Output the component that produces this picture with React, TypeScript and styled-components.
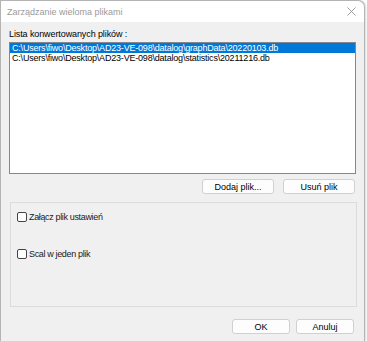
import React from "react";
import styled, { createGlobalStyle } from "styled-components";

const Global = createGlobalStyle`
  html, body { margin: 0; padding: 0; background: #ffffff; overflow: hidden; }
  body { font-family: "Liberation Sans", Arial, sans-serif; }
`;

const Window = styled.div`
  width: 365px;
  height: 341px;
  box-sizing: border-box;
  border: 1px solid #b4b4b4;
  border-bottom: none;
  border-top-right-radius: 7px;
  background: #f0f0f0;
  display: flex;
  flex-direction: column;
  box-shadow: 1px 0 2px rgba(0,0,0,0.15);
  overflow: hidden;
`;

const TitleBar = styled.div`
  height: 21px;
  flex: none;
  background: #ffffff;
  display: flex;
  align-items: center;
  justify-content: space-between;
  padding: 0 8px 0 6px;
  border-top-right-radius: 7px;
`;

const Title = styled.span`
  font-size: 9px;
  color: #9a9a9a;
`;

const Close = styled.svg`
  width: 9px;
  height: 9px;
`;

const Body = styled.div`
  flex: 1;
  display: flex;
  flex-direction: column;
  padding: 0 8px 0 8px;
`;

const Label = styled.div`
  font-size: 9px;
  color: #000;
  margin-top: 6px;
  height: 12px;
  line-height: 12px;
  letter-spacing: -0.1px;
`;

const ListBox = styled.div`
  margin-top: 2px;
  height: 132px;
  flex: none;
  box-sizing: border-box;
  border: 1px solid #828790;
  background: #fff;
  padding: 0;
`;

const Row = styled.div<{ $selected?: boolean }>`
  height: 10px;
  line-height: 10px;
  font-size: 9px;
  letter-spacing: -0.2px;
  padding-left: 2px;
  color: ${(p) => (p.$selected ? "#ffffff" : "#000000")};
  background: ${(p) => (p.$selected ? "#0078d7" : "transparent")};
  white-space: nowrap;
`;

const ButtonRow = styled.div`
  display: flex;
  justify-content: flex-end;
  gap: 9px;
  margin-top: 5px;
  padding-right: 1px;
`;

const Button = styled.div<{ $w?: number }>`
  width: ${(p) => p.$w ?? 72}px;
  height: 15px;
  box-sizing: border-box;
  border: 1px solid #d0d0d0;
  border-radius: 3px;
  background: #fdfdfd;
  font-size: 9px;
  color: #000;
  display: flex;
  align-items: center;
  justify-content: center;
`;

const Group = styled.div`
  margin-top: 8px;
  margin-left: 1px;
  width: 347px;
  height: 105px;
  flex: none;
  box-sizing: border-box;
  border: 1px solid #dcdcdc;
  display: flex;
  flex-direction: column;
  padding: 9px 0 0 6px;
  gap: 27px;
`;

const Check = styled.label`
  display: flex;
  align-items: center;
  height: 10px;
  gap: 2px;
  font-size: 9px;
  letter-spacing: -0.35px;
  color: #1a1a1a;
`;

const Box = styled.span`
  width: 10px;
  height: 10px;
  box-sizing: border-box;
  border: 1px solid #444;
  border-radius: 2px;
  background: #fff;
`;

const Footer = styled.div`
  display: flex;
  justify-content: flex-end;
  gap: 6px;
  margin-top: 12px;
  padding-right: 2px;
`;

export default function App() {
  return (
    <>
      <Global />
      <Window>
        <TitleBar>
          <Title>Zarządzanie wieloma plikami</Title>
          <Close viewBox="0 0 10 10">
            <path d="M0.5 0.5 L9.5 9.5 M9.5 0.5 L0.5 9.5" stroke="#8a8a8a" strokeWidth="0.9" />
          </Close>
        </TitleBar>
        <Body>
          <Label>Lista konwertowanych plików :</Label>
          <ListBox>
            <Row $selected>C:\Users\fiwo\Desktop\AD23-VE-098\datalog\graphData\20220103.db</Row>
            <Row>C:\Users\fiwo\Desktop\AD23-VE-098\datalog\statistics\20211216.db</Row>
          </ListBox>
          <ButtonRow>
            <Button>Dodaj plik...</Button>
            <Button>Usuń plik</Button>
          </ButtonRow>
          <Group>
            <Check><Box />Załącz plik ustawień</Check>
            <Check><Box />Scal w jeden plik</Check>
          </Group>
          <Footer>
            <Button $w={58}>OK</Button>
            <Button $w={58}>Anuluj</Button>
          </Footer>
        </Body>
      </Window>
    </>
  );
}
